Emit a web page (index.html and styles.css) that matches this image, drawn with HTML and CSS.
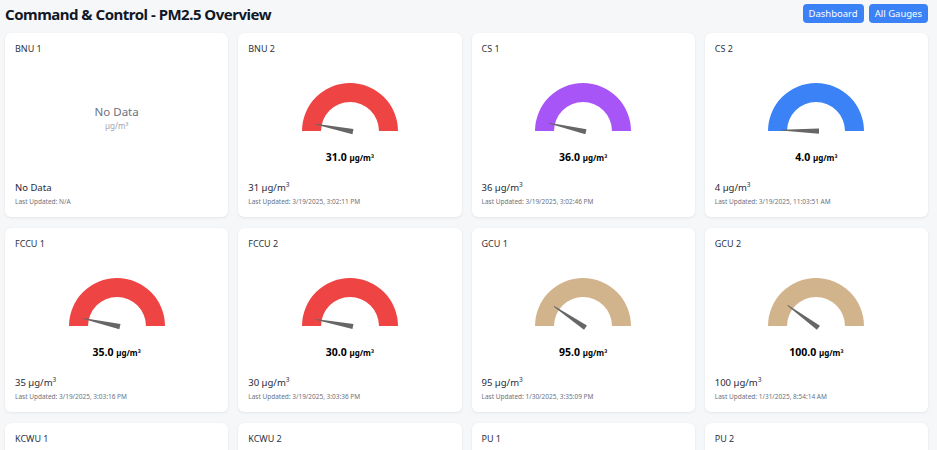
FILE: index.html
```html
<!DOCTYPE html>
<html lang="en">
<head>
<meta charset="utf-8">
<title>Command &amp; Control - PM2.5 Overview</title>
<link rel="stylesheet" href="styles.css">
</head>
<body>
<header class="top">
  <h1 class="title">Command &amp; Control - PM2.5 Overview</h1>
  <nav class="actions">
    <button class="btn">Dashboard</button>
    <button class="btn">All Gauges</button>
  </nav>
</header>
<main class="grid">
  <section class="card">
    <div class="card-title">BNU 1</div>
    <div class="nodata">
      <div class="nodata-main">No Data</div>
      <div class="nodata-unit">µg/m³</div>
    </div>
    <div class="foot">
      <div class="reading">No Data</div>
      <div class="updated">Last Updated: N/A</div>
    </div>
  </section>

  <section class="card">
    <div class="card-title">BNU 2</div>
    <svg class="gauge" viewBox="0 0 100 52" width="100" height="52">
      <path class="arc red" d="M2,48 A48,48 0 0 1 98,48 L79,48 A29,29 0 0 0 21,48 Z"/>
      <polygon class="needle" points="15,47.6 15,48.4 53,50.6 53,45.4" transform="rotate(11.2 50 48)"/>
    </svg>
    <div class="value">31.0 <span class="unit">µg/m³</span></div>
    <div class="foot">
      <div class="reading">31 µg/m<sup>3</sup></div>
      <div class="updated">Last Updated: 3/19/2025, 3:02:11 PM</div>
    </div>
  </section>

  <section class="card">
    <div class="card-title">CS 1</div>
    <svg class="gauge" viewBox="0 0 100 52" width="100" height="52">
      <path class="arc purple" d="M2,48 A48,48 0 0 1 98,48 L79,48 A29,29 0 0 0 21,48 Z"/>
      <polygon class="needle" points="15,47.6 15,48.4 53,50.6 53,45.4" transform="rotate(13 50 48)"/>
    </svg>
    <div class="value">36.0 <span class="unit">µg/m³</span></div>
    <div class="foot">
      <div class="reading">36 µg/m<sup>3</sup></div>
      <div class="updated">Last Updated: 3/19/2025, 3:02:46 PM</div>
    </div>
  </section>

  <section class="card">
    <div class="card-title">CS 2</div>
    <svg class="gauge" viewBox="0 0 100 52" width="100" height="52">
      <path class="arc blue" d="M2,48 A48,48 0 0 1 98,48 L79,48 A29,29 0 0 0 21,48 Z"/>
      <polygon class="needle" points="15,47.6 15,48.4 53,50.6 53,45.4" transform="rotate(1.4 50 48)"/>
    </svg>
    <div class="value">4.0 <span class="unit">µg/m³</span></div>
    <div class="foot">
      <div class="reading">4 µg/m<sup>3</sup></div>
      <div class="updated">Last Updated: 3/19/2025, 11:03:51 AM</div>
    </div>
  </section>

  <section class="card">
    <div class="card-title">FCCU 1</div>
    <svg class="gauge" viewBox="0 0 100 52" width="100" height="52">
      <path class="arc red" d="M2,48 A48,48 0 0 1 98,48 L79,48 A29,29 0 0 0 21,48 Z"/>
      <polygon class="needle" points="15,47.6 15,48.4 53,50.6 53,45.4" transform="rotate(12.6 50 48)"/>
    </svg>
    <div class="value">35.0 <span class="unit">µg/m³</span></div>
    <div class="foot">
      <div class="reading">35 µg/m<sup>3</sup></div>
      <div class="updated">Last Updated: 3/19/2025, 3:03:16 PM</div>
    </div>
  </section>

  <section class="card">
    <div class="card-title">FCCU 2</div>
    <svg class="gauge" viewBox="0 0 100 52" width="100" height="52">
      <path class="arc red" d="M2,48 A48,48 0 0 1 98,48 L79,48 A29,29 0 0 0 21,48 Z"/>
      <polygon class="needle" points="15,47.6 15,48.4 53,50.6 53,45.4" transform="rotate(10.8 50 48)"/>
    </svg>
    <div class="value">30.0 <span class="unit">µg/m³</span></div>
    <div class="foot">
      <div class="reading">30 µg/m<sup>3</sup></div>
      <div class="updated">Last Updated: 3/19/2025, 3:03:36 PM</div>
    </div>
  </section>

  <section class="card">
    <div class="card-title">GCU 1</div>
    <svg class="gauge" viewBox="0 0 100 52" width="100" height="52">
      <path class="arc tan" d="M2,48 A48,48 0 0 1 98,48 L79,48 A29,29 0 0 0 21,48 Z"/>
      <polygon class="needle" points="15,47.6 15,48.4 53,50.6 53,45.4" transform="rotate(34.2 50 48)"/>
    </svg>
    <div class="value">95.0 <span class="unit">µg/m³</span></div>
    <div class="foot">
      <div class="reading">95 µg/m<sup>3</sup></div>
      <div class="updated">Last Updated: 1/30/2025, 3:35:09 PM</div>
    </div>
  </section>

  <section class="card">
    <div class="card-title">GCU 2</div>
    <svg class="gauge" viewBox="0 0 100 52" width="100" height="52">
      <path class="arc tan" d="M2,48 A48,48 0 0 1 98,48 L79,48 A29,29 0 0 0 21,48 Z"/>
      <polygon class="needle" points="15,47.6 15,48.4 53,50.6 53,45.4" transform="rotate(36 50 48)"/>
    </svg>
    <div class="value">100.0 <span class="unit">µg/m³</span></div>
    <div class="foot">
      <div class="reading">100 µg/m<sup>3</sup></div>
      <div class="updated">Last Updated: 1/31/2025, 8:54:14 AM</div>
    </div>
  </section>

  <section class="card"><div class="card-title">KCWU 1</div></section>
  <section class="card"><div class="card-title">KCWU 2</div></section>
  <section class="card"><div class="card-title">PU 1</div></section>
  <section class="card"><div class="card-title">PU 2</div></section>
</main>
</body>
</html>
```

FILE: styles.css
```css
* { box-sizing: border-box; }

html, body {
  margin: 0;
  padding: 0;
  background: #f6f7f9;
  font-family: "Noto Sans", "Open Sans", sans-serif;
  color: #1f2937;
}

.top {
  display: flex;
  justify-content: space-between;
  align-items: center;
  height: 28px;
  padding: 0 9px 0 5px;
}

.title {
  margin: 0;
  font-size: 15px;
  font-weight: 700;
  color: #111827;
  letter-spacing: -0.5px;
}

.actions {
  display: flex;
  gap: 5px;
  align-self: flex-start;
  padding-top: 4px;
}

.btn {
  font-family: inherit;
  font-size: 9.5px;
  color: #fff;
  background: #3b82f6;
  border: none;
  border-radius: 4px;
  height: 19px;
  padding: 0 6px;
  cursor: pointer;
}

.grid {
  display: grid;
  grid-template-columns: repeat(4, 1fr);
  gap: 11px 10px;
  padding: 5px 9px 0 5px;
}

.card {
  background: #fff;
  border-radius: 6px;
  box-shadow: 0 1px 3px rgba(0, 0, 0, 0.07), 0 0 1px rgba(0, 0, 0, 0.05);
  height: 184px;
  padding: 9px 10px 11px;
  display: flex;
  flex-direction: column;
  align-items: stretch;
}

.card-title {
  font-size: 9px;
  line-height: 13px;
  color: #2d3340;
}

.gauge {
  display: block;
  align-self: center;
  margin-top: 28px;
}

.arc.red { fill: #ef4444; }
.arc.purple { fill: #a855f7; }
.arc.blue { fill: #3b82f6; }
.arc.tan { fill: #d2b48c; }

.needle { fill: #666; }

.value {
  text-align: center;
  font-weight: 700;
  font-size: 10.5px;
  line-height: 14px;
  margin-top: 15px;
  color: #000;
}

.unit { font-size: 8px; }

.nodata {
  text-align: center;
  margin-top: 49px;
}

.nodata-main {
  font-size: 11.5px;
  line-height: 16px;
  color: #6b7280;
}

.nodata-unit {
  font-size: 8px;
  line-height: 11px;
  color: #9ca3af;
}

.foot {
  margin-top: auto;
}

.reading {
  font-size: 9.5px;
  line-height: 13px;
  color: #1f2937;
}

.reading sup {
  font-size: 6.5px;
  line-height: 0;
  vertical-align: 4px;
}

.updated {
  margin-top: 3px;
  font-size: 6.5px;
  line-height: 9px;
  color: #6b7280;
}
```
